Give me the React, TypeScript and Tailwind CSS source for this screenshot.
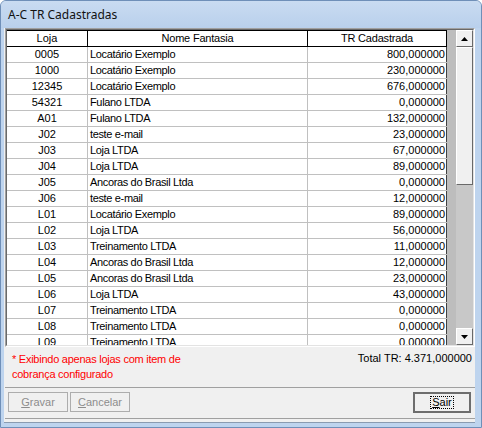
import React from 'react';

interface Loja {
  codigo: string;
  nome: string;
  tr: string;
}

const lojas: Loja[] = [
  { codigo: '0005', nome: 'Locatário Exemplo', tr: '800,000000' },
  { codigo: '1000', nome: 'Locatário Exemplo', tr: '230,000000' },
  { codigo: '12345', nome: 'Locatário Exemplo', tr: '676,000000' },
  { codigo: '54321', nome: 'Fulano LTDA', tr: '0,000000' },
  { codigo: 'A01', nome: 'Fulano LTDA', tr: '132,000000' },
  { codigo: 'J02', nome: 'teste e-mail', tr: '23,000000' },
  { codigo: 'J03', nome: 'Loja LTDA', tr: '67,000000' },
  { codigo: 'J04', nome: 'Loja LTDA', tr: '89,000000' },
  { codigo: 'J05', nome: 'Ancoras do Brasil Ltda', tr: '0,000000' },
  { codigo: 'J06', nome: 'teste e-mail', tr: '12,000000' },
  { codigo: 'L01', nome: 'Locatário Exemplo', tr: '89,000000' },
  { codigo: 'L02', nome: 'Loja LTDA', tr: '56,000000' },
  { codigo: 'L03', nome: 'Treinamento LTDA', tr: '11,000000' },
  { codigo: 'L04', nome: 'Ancoras do Brasil Ltda', tr: '12,000000' },
  { codigo: 'L05', nome: 'Ancoras do Brasil Ltda', tr: '23,000000' },
  { codigo: 'L06', nome: 'Loja LTDA', tr: '43,000000' },
  { codigo: 'L07', nome: 'Treinamento LTDA', tr: '0,000000' },
  { codigo: 'L08', nome: 'Treinamento LTDA', tr: '0,000000' },
  { codigo: 'L09', nome: 'Treinamento LTDA', tr: '0,000000' },
];

const ScrollButton = ({ down }: { down?: boolean }) => (
  <div className="h-[17px] w-[17px] shrink-0 bg-[#f0f0f0] border border-t-white border-l-white border-b-[#696969] border-r-[#696969] flex items-center justify-center">
    <svg width="7" height="4" viewBox="0 0 7 4">
      {down ? <polygon points="0,0 7,0 3.5,4" fill="#000" /> : <polygon points="0,4 7,4 3.5,0" fill="#000" />}
    </svg>
  </div>
);

export default function App() {
  return (
    <div
      className="w-[482px] h-[428px] flex flex-col bg-[#bed4ee] border border-[#6f8fb8] rounded-t-[6px] overflow-hidden"
      style={{ fontFamily: '"Liberation Sans", Arial, sans-serif' }}
    >
      {/* title bar */}
      <div className="h-[27px] shrink-0 flex items-center pl-[7px] bg-gradient-to-b from-[#c9dbf1] to-[#b9d0ec]">
        <span className="text-[12px] text-[#111] pt-[1px]" style={{ fontFamily: '"Noto Sans", "Open Sans", sans-serif' }}>
          A-C TR Cadastradas
        </span>
      </div>

      <div className="flex-1 flex pl-[3px] pr-[6px] pb-[4px]">
        <div className="flex-1 flex flex-col bg-[#f0f0f0] pl-[1px] border-b border-[#8a9bb0]">
          {/* grid */}
          <div className="h-[319px] shrink-0 border border-t-[#a0a0a0] border-l-[#a0a0a0] border-b-white border-r-white">
            <div className="h-full border border-t-[#696969] border-l-[#696969] border-b-[#e3e3e3] border-r-[#e3e3e3] flex bg-white">
              <div className="w-[440px] overflow-hidden text-[11px] text-black leading-none">
                <div className="flex h-[17px] border-t border-b border-black">
                  <div className="w-[81px] border-r border-black flex items-center justify-center">Loja</div>
                  <div className="w-[220px] border-r border-black flex items-center justify-center tracking-[-0.2px]">Nome Fantasia</div>
                  <div className="w-[139px] border-r border-black flex items-center justify-center tracking-[-0.2px]">TR Cadastrada</div>
                </div>
                {lojas.map((l) => (
                  <div key={l.codigo} className="flex h-[16px] border-b border-[#c0c0c0]">
                    <div className="w-[81px] border-r border-[#c0c0c0] flex items-center justify-center">{l.codigo}</div>
                    <div className="w-[220px] border-r border-[#c0c0c0] flex items-center pl-[2px] tracking-[-0.35px]">{l.nome}</div>
                    <div className="w-[139px] border-r border-[#404040] flex items-center justify-end pr-[1px]">{l.tr}</div>
                  </div>
                ))}
              </div>
              <div className="w-[9px] bg-[#bdbdbd]" />
              <div className="w-[17px] flex flex-col bg-[#c8c8c8]">
                <ScrollButton />
                <div className="h-[138px] shrink-0 bg-[#f0f0f0] border border-t-white border-l-white border-b-[#696969] border-r-[#696969]" />
                <div className="flex-1" />
                <ScrollButton down />
              </div>
            </div>
          </div>

          {/* info */}
          <div className="h-[40px] shrink-0 flex justify-between text-[11px]">
            <div className="pl-[7px] pt-[5px] text-[#ff0000] leading-[15px] tracking-[-0.25px]">
              <div>* Exibindo apenas lojas com item de</div>
              <div>cobrança configurado</div>
            </div>
            <div className="pr-[3px] pt-[4px] text-black leading-[15px]">Total TR: 4.371,000000</div>
          </div>

          {/* buttons */}
          <div className="h-[32px] shrink-0 border-t border-[#a0a0a0] border-b border-b-[#a0a0a0] flex justify-between items-start pt-[4px] pl-[3px] pr-[4px] text-[11px]">
            <div className="flex gap-[2px]">
              <div className="w-[60px] h-[20px] border border-[#adadad] bg-[#f0f0f0] flex items-center justify-center text-[#8d8d8d]">
                <span><span className="underline">G</span>ravar</span>
              </div>
              <div className="w-[60px] h-[20px] border border-[#adadad] bg-[#f0f0f0] flex items-center justify-center text-[#8d8d8d]">
                <span><span className="underline">C</span>ancelar</span>
              </div>
            </div>
            <div className="w-[58px] h-[21px] border-2 border-[#6d6d6d] bg-[#f0f0f0] flex items-center justify-center text-black">
              <span className="border border-dotted border-black px-[1px] leading-[11px]">
                <span className="underline">S</span>air
              </span>
            </div>
          </div>
          <div className="flex-1" />
        </div>
      </div>
    </div>
  );
}
